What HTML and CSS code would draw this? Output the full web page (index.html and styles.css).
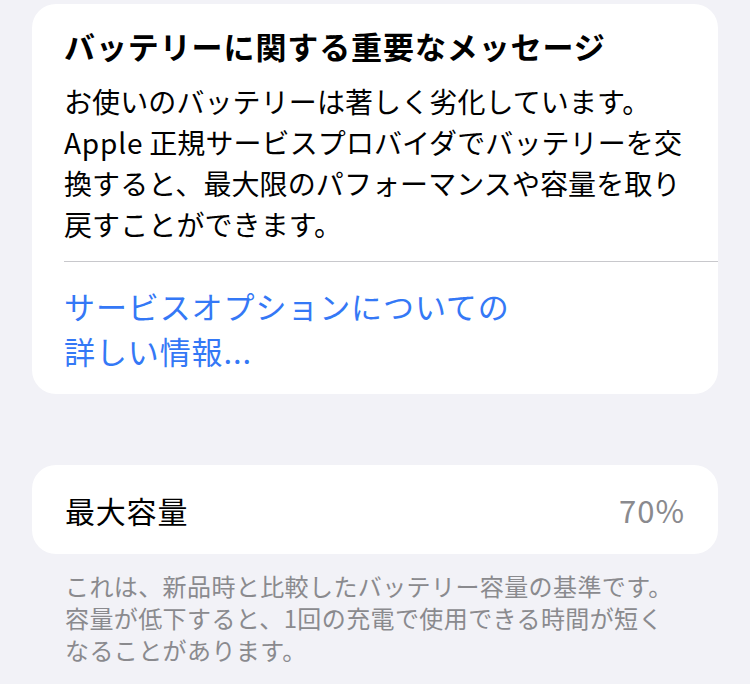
FILE: index.html
```html
<!DOCTYPE html>
<html>
<head>
    <meta charset="utf-8">
    <title>バッテリーの状態</title>
    <link rel="stylesheet" href="styles.css">
</head>
<body>
    <div class="page">
        <div class="card notice">
            <div class="notice__body">
                <h2 class="notice__title">バッテリーに関する重要なメッセージ</h2>
                <p class="notice__text">お使いのバッテリーは著しく劣化しています。<br><span class="latin">Apple</span>正規サービスプロバイダでバッテリーを交<br>換すると、最大限のパフォーマンスや容量を取り<br>戻すことができます。</p>
            </div>
            <a href="#" class="notice__link">サービスオプションについての<br>詳しい情報...</a>
        </div>

        <div class="card row">
            <span class="row__label">最大容量</span>
            <span class="row__value">70%</span>
        </div>
        <p class="footnote">これは、新品時と比較したバッテリー容量の基準です。<br>容量が低下すると、1回の充電で使用できる時間が短く<br>なることがあります。</p>
    </div>
</body>
</html>
```

FILE: styles.css
```css
* {
    margin: 0;
    padding: 0;
    box-sizing: border-box;
}
html, body {
    height: 100%;
}
body {
    background: #f2f2f7;
    font-family: "Noto Sans CJK JP", "Noto Sans", sans-serif;
    color: #000;
}
.page {
    padding: 4px 32px 0;
}
.card {
    background: #fff;
    border-radius: 24px;
}
.notice__body {
    padding: 22px 0 16px;
    margin-left: 32px;
    border-bottom: 1px solid #c8c8cc;
    white-space: nowrap;
}
.notice__title {
    font-size: 31px;
    font-weight: 700;
    line-height: 40px;
    letter-spacing: 0.9px;
}
.notice__text {
    margin-top: 15px;
    font-size: 28px;
    line-height: 41px;
    letter-spacing: 0.1px;
}
/* 和文との間に少し隙間を空ける */
.latin {
    letter-spacing: 0.8px;
    margin-right: 6px;
}
.notice__link {
    display: block;
    padding: 21px 32px;
    font-size: 31px;
    line-height: 45px;
    letter-spacing: 0.9px;
    white-space: nowrap;
    color: #3478f6;
    text-decoration: none;
}
.row {
    margin-top: 71px;
    height: 89px;
    display: flex;
    align-items: center;
    justify-content: space-between;
    padding: 0 33px;
    font-size: 30px;
    letter-spacing: 0.8px;
}
.row__value {
    font-size: 31px;
    letter-spacing: 1px;
    color: #8a8a8e;
}
.footnote {
    margin-top: 16px;
    padding-left: 33px;
    font-size: 24px;
    line-height: 32px;
    letter-spacing: 0.4px;
    white-space: nowrap;
    color: #8a8a8e;
}
```
